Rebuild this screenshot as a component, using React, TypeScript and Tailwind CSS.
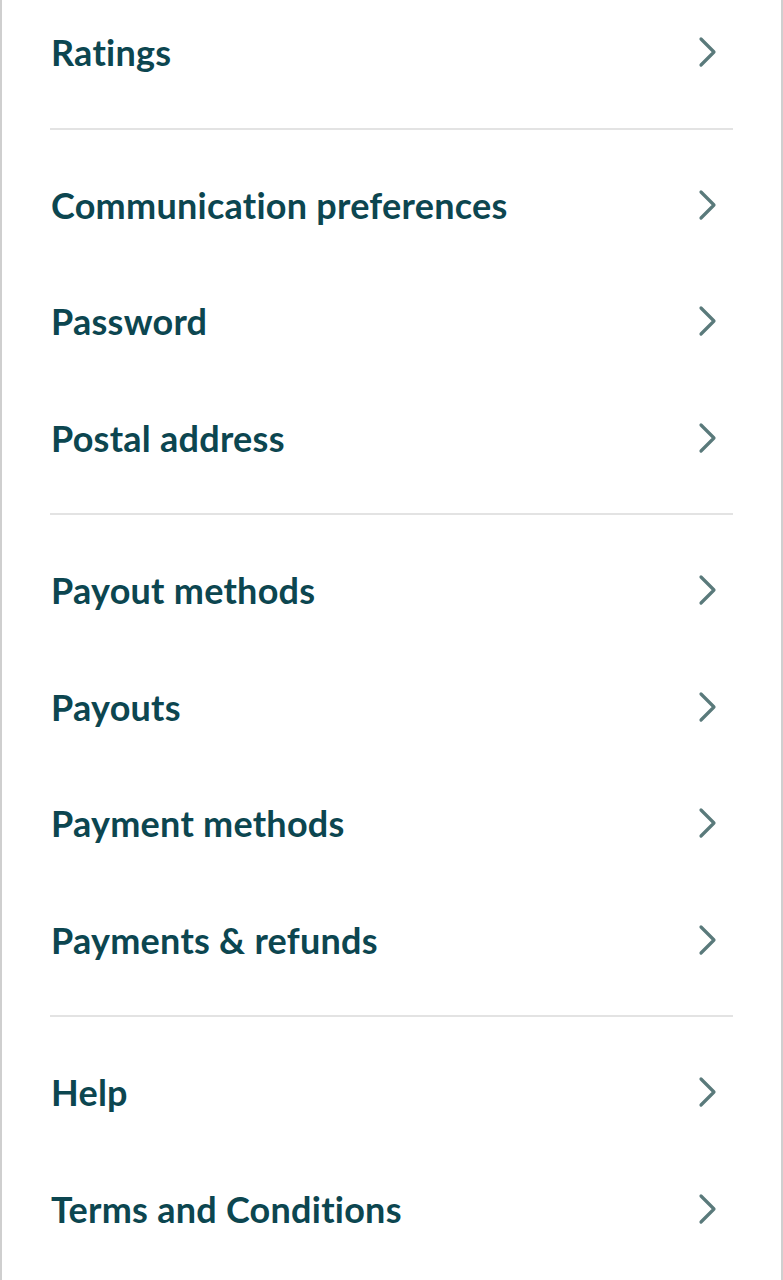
import React from "react";

const groups: string[][] = [
  ["Ratings"],
  ["Communication preferences", "Password", "Postal address"],
  ["Payout methods", "Payouts", "Payment methods", "Payments & refunds"],
  ["Help", "Terms and Conditions"],
];

function Chevron() {
  return (
    <svg width="22" height="32" viewBox="0 0 22 32" fill="none" className="shrink-0">
      <path d="M4 3 L17 16 L4 29" stroke="#5a7a7b" strokeWidth="3.2" strokeLinecap="round" strokeLinejoin="round" />
    </svg>
  );
}

function Row({ label }: { label: string }) {
  return (
    <div className="flex h-[116.5px] items-center justify-between pl-[49px] pr-[62px]">
      <span className="text-[36px] font-bold leading-none tracking-[0.25px] text-[#0c4650] [font-variant-ligatures:none]">
        {label}
      </span>
      <Chevron />
    </div>
  );
}

export default function App() {
  return (
    <div
      className="h-[1280px] w-[783px] overflow-hidden border-l-2 border-r-2 border-[#cfcfcf] bg-white"
      style={{ fontFamily: "Lato, 'Noto Sans', sans-serif" }}
    >
      <div className="-mt-[6px] flex flex-col">
        {groups.map((g, i) => (
          <div key={i} className="flex flex-col">
            {i > 0 && <div className="ml-[48px] mr-[48px] my-[17px] h-[2px] bg-[#e3e3e3]" />}
            {g.map((l) => (
              <Row key={l} label={l} />
            ))}
          </div>
        ))}
      </div>
    </div>
  );
}
